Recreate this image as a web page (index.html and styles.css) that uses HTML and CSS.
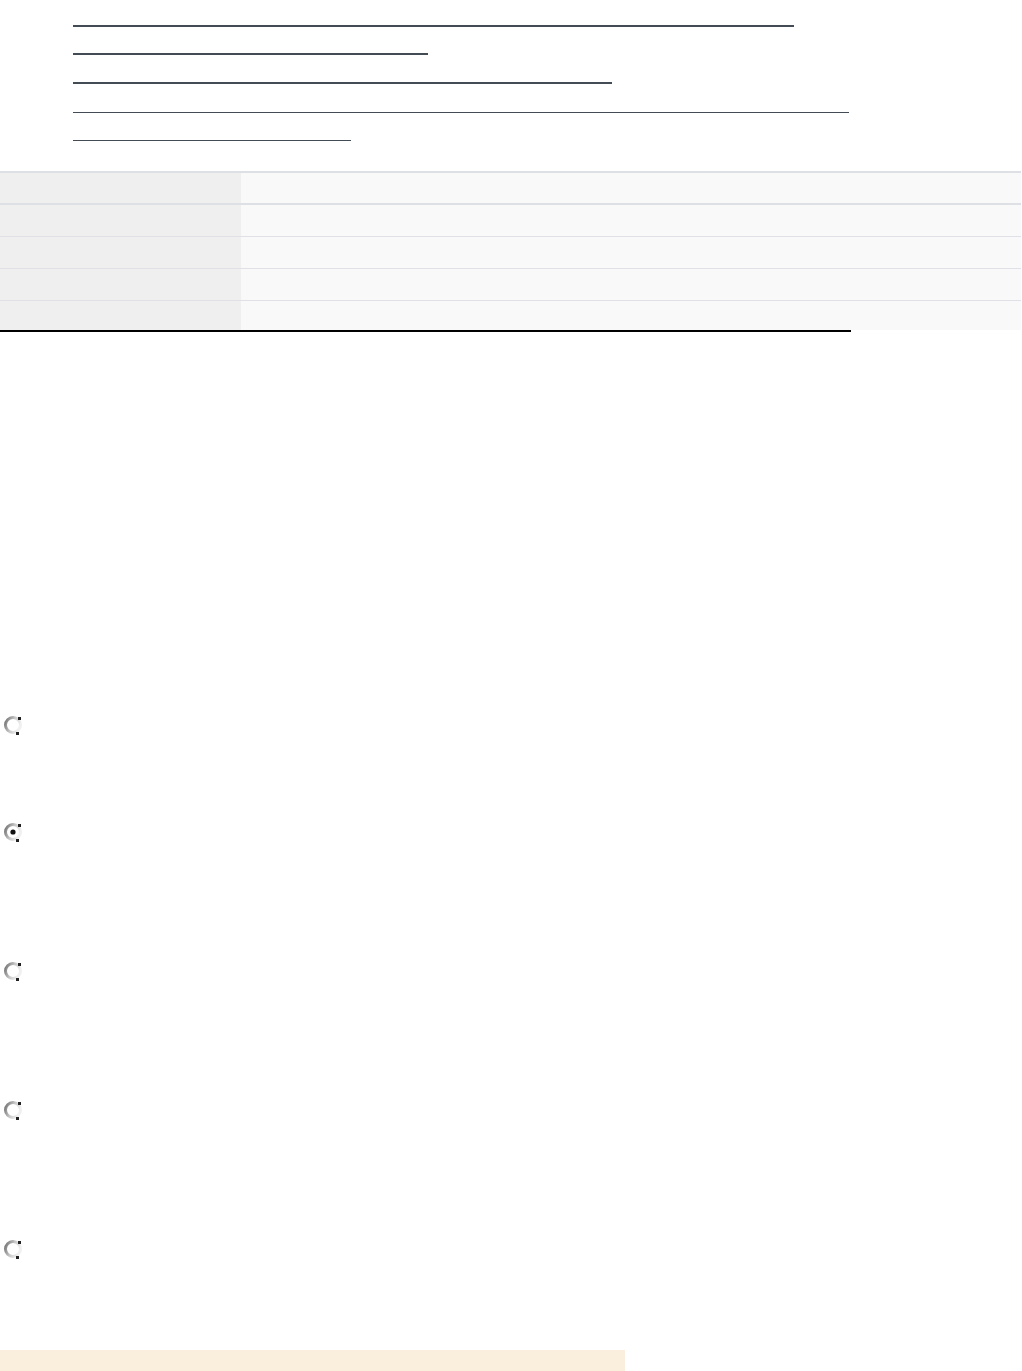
FILE: index.html
```html
<!DOCTYPE html>
<html lang="en">
<head>
<meta charset="utf-8">
<title>Page</title>
<link rel="stylesheet" href="styles.css">
</head>
<body>
<ul class="links">
  <li class="link thick w1"></li>
  <li class="link thick w2"></li>
  <li class="link thick w3"></li>
  <li class="link thin w4"></li>
  <li class="link thin w5"></li>
</ul>

<table class="info">
  <tbody>
    <tr class="strong r1"><th></th><td></td></tr>
    <tr class="strong"><th></th><td></td></tr>
    <tr><th></th><td></td></tr>
    <tr><th></th><td></td></tr>
    <tr class="last"><th></th><td></td></tr>
  </tbody>
</table>
<div class="rule"></div>

<div class="options">
  <div class="option o1">
    <svg class="radio" width="20" height="20" viewBox="0 0 20 20">
      <defs><linearGradient id="g1" x1="0" y1="0" x2="1" y2="0.4"><stop offset="0" stop-color="#6e6e6e"/><stop offset="0.55" stop-color="#c8c8c8"/><stop offset="1" stop-color="#f0f0f0"/></linearGradient></defs>
      <circle cx="10" cy="10" r="7.5" fill="#fff" stroke="url(#g1)" stroke-width="3"/>
      <rect x="15" y="2" width="3" height="3" fill="#222"/>
      <rect x="13" y="17" width="3" height="3" fill="#222"/>
    </svg>
  </div>
  <div class="option o2">
    <svg class="radio" width="20" height="20" viewBox="0 0 20 20">
      <defs><linearGradient id="g2" x1="0" y1="0" x2="1" y2="0.4"><stop offset="0" stop-color="#6e6e6e"/><stop offset="0.55" stop-color="#c8c8c8"/><stop offset="1" stop-color="#f0f0f0"/></linearGradient></defs>
      <circle cx="10" cy="10" r="7.5" fill="#fff" stroke="url(#g2)" stroke-width="3"/>
      <circle cx="10" cy="10" r="2.6" fill="#111"/>
      <rect x="15" y="2" width="3" height="3" fill="#222"/>
      <rect x="13" y="17" width="3" height="3" fill="#222"/>
    </svg>
  </div>
  <div class="option o3">
    <svg class="radio" width="20" height="20" viewBox="0 0 20 20">
      <defs><linearGradient id="g3" x1="0" y1="0" x2="1" y2="0.4"><stop offset="0" stop-color="#6e6e6e"/><stop offset="0.55" stop-color="#c8c8c8"/><stop offset="1" stop-color="#f0f0f0"/></linearGradient></defs>
      <circle cx="10" cy="10" r="7.5" fill="#fff" stroke="url(#g3)" stroke-width="3"/>
      <rect x="15" y="2" width="3" height="3" fill="#222"/>
      <rect x="13" y="17" width="3" height="3" fill="#222"/>
    </svg>
  </div>
  <div class="option o4">
    <svg class="radio" width="20" height="20" viewBox="0 0 20 20">
      <defs><linearGradient id="g4" x1="0" y1="0" x2="1" y2="0.4"><stop offset="0" stop-color="#6e6e6e"/><stop offset="0.55" stop-color="#c8c8c8"/><stop offset="1" stop-color="#f0f0f0"/></linearGradient></defs>
      <circle cx="10" cy="10" r="7.5" fill="#fff" stroke="url(#g4)" stroke-width="3"/>
      <rect x="15" y="2" width="3" height="3" fill="#222"/>
      <rect x="13" y="17" width="3" height="3" fill="#222"/>
    </svg>
  </div>
  <div class="option o5">
    <svg class="radio" width="20" height="20" viewBox="0 0 20 20">
      <defs><linearGradient id="g5" x1="0" y1="0" x2="1" y2="0.4"><stop offset="0" stop-color="#6e6e6e"/><stop offset="0.55" stop-color="#c8c8c8"/><stop offset="1" stop-color="#f0f0f0"/></linearGradient></defs>
      <circle cx="10" cy="10" r="7.5" fill="#fff" stroke="url(#g5)" stroke-width="3"/>
      <rect x="15" y="2" width="3" height="3" fill="#222"/>
      <rect x="13" y="17" width="3" height="3" fill="#222"/>
    </svg>
  </div>
</div>

<div class="notice"></div>
</body>
</html>
```
FILE: styles.css
```css
html, body {
  margin: 0;
  padding: 0;
  background: #ffffff;
  font-family: "Liberation Sans", Arial, sans-serif;
}

.links {
  list-style: none;
  margin: 0;
  padding: 25px 0 0 73px;
  display: flex;
  flex-direction: column;
  align-items: flex-start;
}

.link {
  height: 0;
  border-top: 2px solid #434b55;
}
.link.thin { border-top-width: 1px; }

.w1 { width: 721px; }
.w2 { width: 355px; margin-top: 26px; }
.w3 { width: 539px; margin-top: 27px; }
.w4 { width: 776px; margin-top: 28px; }
.w5 { width: 278px; margin-top: 27px; }

.info {
  margin-top: 30px;
  width: 1021px;
  border-collapse: separate;
  border-spacing: 0;
}

.info th,
.info td {
  padding: 0;
  height: 31px;
  border-top: 1px solid #e0e1e6;
  box-sizing: content-box;
}
.info tr.strong th,
.info tr.strong td {
  height: 30px;
  border-top: 2px solid #dde1e5;
}
.info tr.strong.r1 th,
.info tr.strong.r1 td { height: 30px; }
.info tr.strong:not(.r1) th,
.info tr.strong:not(.r1) td { height: 31px; }
.info tr.last th,
.info tr.last td { height: 29px; }

.info th {
  width: 241px;
  background: #efefef;
}
.info td { background: #f9f9f9; }

.rule {
  width: 851px;
  height: 2px;
  background: #000;
}

.options {
  display: flex;
  flex-direction: column;
  padding-left: 3px;
  margin-top: 383px;
}

.option { height: 20px; }
.radio {
  display: block;
  filter: blur(0.35px);
}
.o2 { margin-top: 87px; }
.o3 { margin-top: 119px; }
.o4 { margin-top: 119px; }
.o5 { margin-top: 119px; }

.notice {
  margin-top: 91px;
  width: 625px;
  height: 21px;
  background: #faeedd;
}
```
